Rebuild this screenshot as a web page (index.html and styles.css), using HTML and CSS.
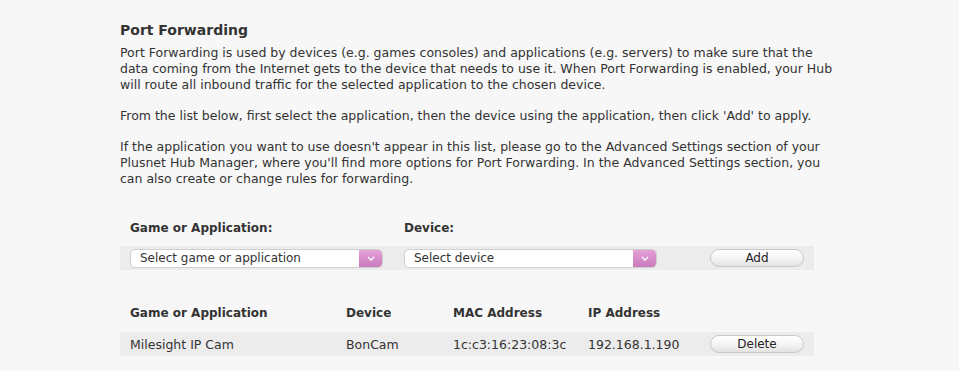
FILE: index.html
```html
<!DOCTYPE html>
<html lang="en">
<head>
  <title>Port Forwarding</title>
  <link rel="stylesheet" href="styles.css">
</head>
<body>
  <div class="page">
    <h2>Port Forwarding</h2>
    <p>Port Forwarding is used by devices (e.g. games consoles) and applications (e.g. servers) to make sure that the data coming from the Internet gets to the device that needs to use it. When Port Forwarding is enabled, your Hub will route all inbound traffic for the selected application to the chosen device.</p>
    <p>From the list below, first select the application, then the device using the application, then click 'Add' to apply.</p>
    <p>If the application you want to use doesn't appear in this list, please go to the Advanced Settings section of your Plusnet Hub Manager, where you'll find more options for Port Forwarding. In the Advanced Settings section, you can also create or change rules for forwarding.</p>

    <div class="add-form">
      <div class="labels">
        <span class="col-app">Game or Application:</span>
        <span>Device:</span>
      </div>
      <div class="band">
        <div class="select col-app-sel">
          <span>Select game or application</span>
          <span class="arrow"><svg width="8" height="5" viewBox="0 0 8 5"><path d="M1 1 L4 4 L7 1" fill="none" stroke="#fff" stroke-width="1.3"/></svg></span>
        </div>
        <div class="select">
          <span>Select device</span>
          <span class="arrow"><svg width="8" height="5" viewBox="0 0 8 5"><path d="M1 1 L4 4 L7 1" fill="none" stroke="#fff" stroke-width="1.3"/></svg></span>
        </div>
        <button class="btn">Add</button>
      </div>
    </div>

    <div class="rules">
      <div class="row head">
        <span class="c-app">Game or Application</span>
        <span class="c-dev">Device</span>
        <span class="c-mac">MAC Address</span>
        <span class="c-ip">IP Address</span>
      </div>
      <div class="row band">
        <span class="c-app">Milesight IP Cam</span>
        <span class="c-dev">BonCam</span>
        <span class="c-mac">1c:c3:16:23:08:3c</span>
        <span class="c-ip">192.168.1.190</span>
        <button class="btn">Delete</button>
      </div>
    </div>
  </div>
</body>
</html>
```

FILE: styles.css
```css
body {
  margin: 0;
  background-color: #f7f7f7;
  font-family: "DejaVu Sans", Verdana, sans-serif;
  font-size: 12.5px;
  color: #333;
}
.page {
  width: 720px;
  padding: 22px 0 0 120px;
}
h2 {
  margin: 0 0 7px 0;
  font-size: 14px;
  color: #333;
}
p {
  margin: 0 0 15px 0;
  line-height: 16px;
}
.add-form {
  margin-top: 34px;
  width: 694px;
  font-size: 12px;
}
.labels {
  display: flex;
  padding: 0 10px;
  font-weight: bold;
  height: 25px;
}
.labels .col-app {
  width: 274px;
}
.band {
  display: flex;
  align-items: center;
  background-color: #ececec;
  height: 24px;
  padding: 0 10px;
}
.select {
  display: flex;
  align-items: center;
  justify-content: space-between;
  box-sizing: border-box;
  width: 253px;
  height: 19px;
  background: #fff;
  border: 1px solid #cfcfcf;
  border-radius: 5px;
  padding-left: 9px;
  overflow: hidden;
}
.col-app-sel {
  margin-right: 21px;
}
.arrow {
  display: flex;
  align-items: center;
  justify-content: center;
  width: 23px;
  height: 19px;
  background: linear-gradient(#e6a3d9, #c877bb);
  border-radius: 0 5px 5px 0;
}
.btn {
  margin-left: auto;
  width: 94px;
  height: 18px;
  padding: 0;
  border: 1px solid #c8c8c8;
  border-radius: 9px;
  background: linear-gradient(#ffffff, #f2f2f2 60%, #e2e2e2);
  font-family: "DejaVu Sans", Verdana, sans-serif;
  font-size: 12px;
  color: #222;
}
.rules {
  margin-top: 30px;
  width: 694px;
}
.row {
  display: flex;
  align-items: center;
  padding: 0 10px;
}
.row.head {
  font-weight: bold;
  font-size: 12px;
  height: 25px;
  margin-bottom: 7px;
}
.c-app { width: 216px; }
.c-dev { width: 107px; }
.c-mac { width: 135px; }
.c-ip { width: 110px; }
```
